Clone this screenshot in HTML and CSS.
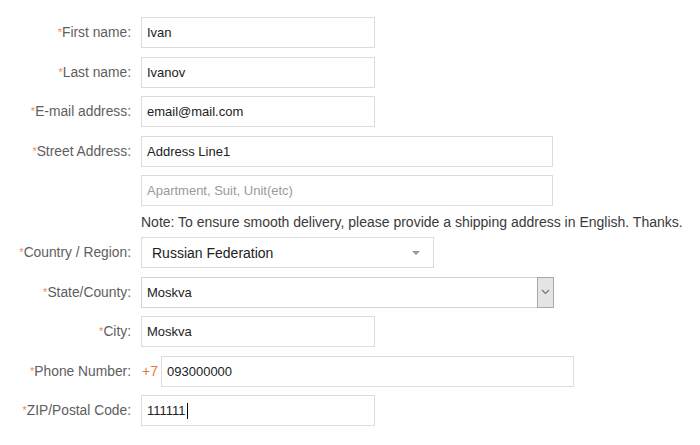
FILE: index.html
```html
<!DOCTYPE html>
<html>
<head>
<meta charset="utf-8">
<link rel="stylesheet" href="styles.css">
</head>
<body>
<form class="form">
  <div class="row">
    <label class="label"><span class="req">*</span>First name:</label>
    <div class="field small">Ivan</div>
  </div>
  <div class="row">
    <label class="label"><span class="req">*</span>Last name:</label>
    <div class="field small">Ivanov</div>
  </div>
  <div class="row">
    <label class="label"><span class="req">*</span>E-mail address:</label>
    <div class="field small">email@mail.com</div>
  </div>
  <div class="row">
    <label class="label"><span class="req">*</span>Street Address:</label>
    <div class="field wide">Address Line1</div>
  </div>
  <div class="row">
    <span class="label"></span>
    <div class="field wide placeholder">Apartment, Suit, Unit(etc)</div>
  </div>
  <div class="row note-row">
    <span class="label"></span>
    <div class="note">Note: To ensure smooth delivery, please provide a shipping address in English. Thanks.</div>
  </div>
  <div class="row">
    <label class="label"><span class="req">*</span>Country / Region:</label>
    <div class="field country">
      <span class="country-text">Russian Federation</span>
      <span class="tri"></span>
    </div>
  </div>
  <div class="row">
    <label class="label"><span class="req">*</span>State/County:</label>
    <div class="field state">
      <span class="state-text">Moskva</span>
      <span class="state-btn">
        <svg width="9" height="6" viewBox="0 0 9 6"><path d="M1 1 L4.5 4.5 L8 1" fill="none" stroke="#777" stroke-width="1.2"/></svg>
      </span>
    </div>
  </div>
  <div class="row">
    <label class="label"><span class="req">*</span>City:</label>
    <div class="field small">Moskva</div>
  </div>
  <div class="row">
    <label class="label"><span class="req">*</span>Phone Number:</label>
    <div class="phone">
      <span class="code">+7</span>
      <div class="field phone-field">093000000</div>
    </div>
  </div>
  <div class="row">
    <label class="label"><span class="req">*</span>ZIP/Postal Code:</label>
    <div class="field small">111111<span class="caret"></span></div>
  </div>
</form>
</body>
</html>
```

FILE: styles.css
```css
html, body {
  margin: 0;
  padding: 0;
  background: #ffffff;
}

body {
  font-family: "Liberation Sans", Arial, sans-serif;
  font-size: 13px;
  color: #333;
}

.form {
  display: flex;
  flex-direction: column;
  gap: 8.5px;
  padding-top: 17px;
}

.row {
  display: flex;
  align-items: center;
  height: 31px;
}

.note-row {
  height: 14px;
}

.label {
  width: 131px;
  flex: none;
  text-align: right;
  color: #5e5e5e;
  margin-right: 10px;
  white-space: nowrap;
  font-size: 13.8px;
}

.req {
  color: #f0895a;
  font-size: 11px;
  vertical-align: 1px;
}

.field {
  box-sizing: border-box;
  height: 31px;
  border: 1px solid #dcdcdc;
  background: #fff;
  padding: 0 5px;
  display: flex;
  align-items: center;
  color: #222;
  white-space: nowrap;
}

.small {
  width: 234px;
}

.wide {
  width: 412px;
}

.placeholder {
  color: #9a9a9a;
}

.note {
  color: #3a3a3a;
  white-space: nowrap;
  line-height: 14px;
  font-size: 14px;
}

.country {
  width: 293px;
  padding: 0 10px;
  justify-content: space-between;
}

.country-text {
  font-size: 14px;
  color: #222;
}

.tri {
  width: 0;
  height: 0;
  border-left: 4px solid transparent;
  border-right: 4px solid transparent;
  border-top: 4px solid #999;
  margin-right: 3px;
  margin-top: 1px;
}

.state {
  width: 413px;
  padding: 0 0 0 5px;
  justify-content: space-between;
  border-color: #d4d4d4;
}

.state-btn {
  box-sizing: border-box;
  width: 17px;
  height: 31px;
  margin: -1px -1px -1px 0;
  background: #e4e4e4;
  border: 1px solid #a9a9a9;
  display: flex;
  align-items: center;
  justify-content: center;
}

.phone {
  display: flex;
  align-items: center;
  margin-left: 1px;
}

.code {
  color: #e8793a;
  width: 19px;
  font-size: 14px;
}

.phone-field {
  width: 413px;
}

.caret {
  display: inline-block;
  width: 1px;
  height: 16px;
  background: #000;
  margin-left: 1px;
}
```
